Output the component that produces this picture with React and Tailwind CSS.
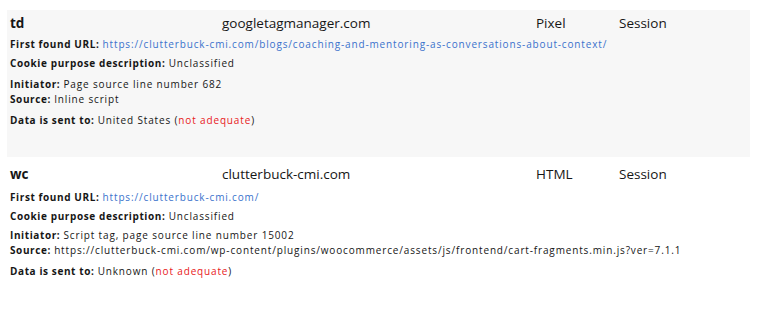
import React from 'react';

const cookies = [
    {
        name: 'td',
        domain: 'googletagmanager.com',
        type: 'Pixel',
        expiry: 'Session',
        url: 'https://clutterbuck-cmi.com/blogs/coaching-and-mentoring-as-conversations-about-context/',
        purpose: 'Unclassified',
        initiator: 'Page source line number 682',
        source: 'Inline script',
        sentTo: 'United States',
    },
    {
        name: 'wc',
        domain: 'clutterbuck-cmi.com',
        type: 'HTML',
        expiry: 'Session',
        url: 'https://clutterbuck-cmi.com/',
        purpose: 'Unclassified',
        initiator: 'Script tag, page source line number 15002',
        source: 'https://clutterbuck-cmi.com/wp-content/plugins/woocommerce/assets/js/frontend/cart-fragments.min.js?ver=7.1.1',
        sentTo: 'Unknown',
    },
];

const Label = ({ children }) => (
    <span className="font-bold tracking-[0.06em]">{children} </span>
);

const CookieRow = ({ cookie, shaded }) => (
    <div className={`px-[3px] ${shaded ? 'bg-[#f7f7f7] pt-[3px] pb-[29px]' : 'pt-[7px] pb-[20px]'}`}>
        <div className={`grid grid-cols-[212px_314px_83px_1fr] h-[20px] items-center text-[13.5px] leading-[20px] ${shaded ? 'mb-[4px]' : 'mb-[6px]'}`}>
            <div className="font-bold">{cookie.name}</div>
            <div>{cookie.domain}</div>
            <div>{cookie.type}</div>
            <div>{cookie.expiry}</div>
        </div>
        <div className="text-[10px] leading-[15px] tracking-[0.085em]">
            <p>
                <Label>First found URL:</Label>
                <a className="text-[#3a72cc]">{cookie.url}</a>
            </p>
            <p className="mt-[4px]">
                <Label>Cookie purpose description:</Label>
                {cookie.purpose}
            </p>
            <p className={shaded ? 'mt-[6px]' : 'mt-[4px]'}>
                <Label>Initiator:</Label>
                {cookie.initiator}
                <br />
                <Label>Source:</Label>
                {cookie.source}
            </p>
            <p className="mt-[6px]">
                <Label>Data is sent to:</Label>
                {cookie.sentTo} (<span className="text-[#e8201c]">not adequate</span>)
            </p>
        </div>
    </div>
);

export default function App() {
    return (
        <div className="w-[764px] h-[322px] bg-white text-[#161616] pl-[7px] pt-[10px] pr-[14px] font-['Open_Sans',sans-serif]">
            {cookies.map((c, i) => (
                <CookieRow key={c.name} cookie={c} shaded={i === 0} />
            ))}
        </div>
    );
}
